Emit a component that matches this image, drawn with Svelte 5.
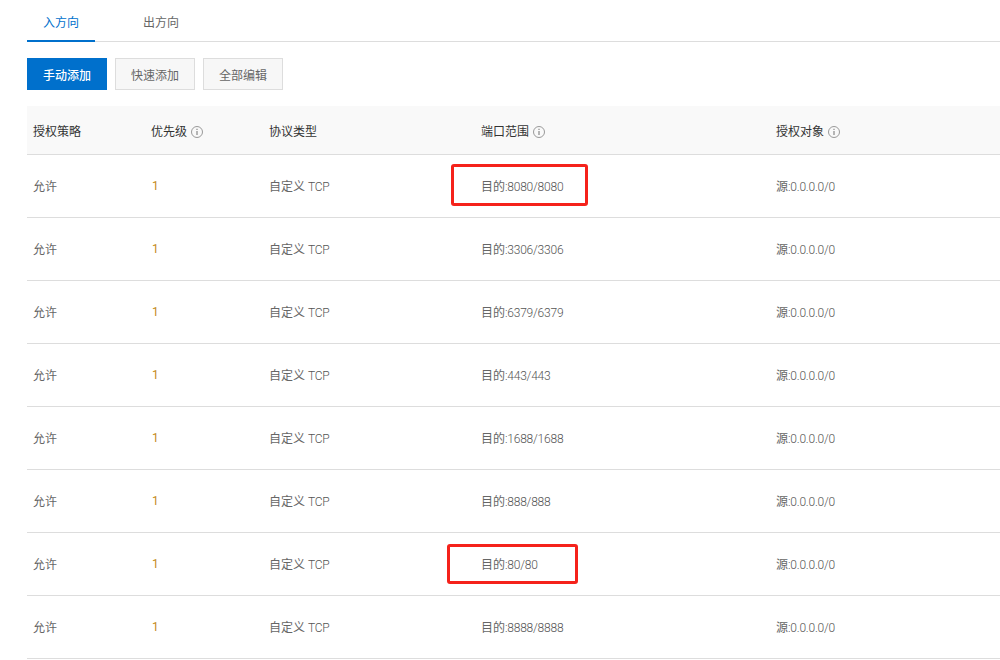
<script lang="ts">
	const ports = ['8080/8080', '3306/3306', '6379/6379', '443/443', '1688/1688', '888/888', '80/80', '8888/8888'];
</script>

{#snippet info()}
	<svg class="info" viewBox="0 0 12 12" aria-hidden="true">
		<circle cx="6" cy="6" r="5.5" fill="none" stroke="#999" stroke-width="1" />
		<path d="M6 5v4M6 2.8v1.3" fill="none" stroke="#888" stroke-width="1.2" />
	</svg>
{/snippet}

<div class="page">
	<div class="tabs">
		<div class="tab active">入方向</div>
		<div class="tab">出方向</div>
	</div>

	<div class="actions">
		<button class="primary">手动添加</button>
		<button>快速添加</button>
		<button>全部编辑</button>
	</div>

	<table>
		<colgroup>
			<col style="width: 118px" />
			<col style="width: 118px" />
			<col style="width: 212px" />
			<col style="width: 295px" />
			<col />
		</colgroup>
		<thead>
			<tr>
				<th>授权策略</th>
				<th>优先级 {@render info()}</th>
				<th>协议类型</th>
				<th>端口范围 {@render info()}</th>
				<th>授权对象 {@render info()}</th>
			</tr>
		</thead>
		<tbody>
			{#each ports as port}
				<tr>
					<td>允许</td>
					<td class="priority"><span class="num">1</span></td>
					<td>自定义 <span class="num">TCP</span></td>
					<td>目的<span class="num">:{port}</span></td>
					<td>源<span class="num">:0.0.0.0/0</span></td>
				</tr>
			{/each}
		</tbody>
	</table>

	<div class="mark first"></div>
	<div class="mark second"></div>
</div>

<style>
	:global(body) {
		margin: 0;
		background: #fff;
		overflow: hidden;
	}

	.page {
		position: relative;
		width: 1000px;
		height: 660px;
		box-sizing: border-box;
		padding: 3px 0 0 27px;
		overflow: hidden;
		font-family: Roboto, "Noto Sans CJK SC", sans-serif;
		font-size: 12px;
		color: #666;
	}

	.tabs {
		display: flex;
		height: 38px;
		border-bottom: 1px solid #ddd;
	}

	.tab {
		width: 68px;
		margin-right: 32px;
		height: 38px;
		line-height: 40px;
		box-sizing: border-box;
		text-align: center;
		color: #666;
	}

	.tab.active {
		color: #0070cc;
		border-bottom: 2px solid #0070cc;
		height: 39px;
	}

	.actions {
		display: flex;
		gap: 8px;
		margin-top: 16px;
	}

	button {
		width: 80px;
		height: 32px;
		padding: 0;
		font: inherit;
		color: #666;
		background: #f7f7f7;
		border: 1px solid #ddd;
	}

	button.primary {
		color: #fff;
		background: #0070cc;
		border-color: #0070cc;
		font-weight: 500;
	}

	table {
		width: 973px;
		margin-top: 16px;
		table-layout: fixed;
		border-collapse: collapse;
	}

	th {
		height: 48px;
		padding: 0 6px;
		text-align: left;
		font-weight: 400;
		color: #333;
		background: #f9f9f9;
		border-bottom: 1px solid #ddd;
	}

	td {
		box-sizing: border-box;
		height: 63px;
		padding: 0 6px 2px;
		border-bottom: 1px solid #ddd;
	}

	/* latin text runs narrower than Roboto's default spacing in the original */
	.num {
		font-weight: 300;
		letter-spacing: -0.22px;
		color: #555;
	}

	.priority .num {
		margin-left: 1px;
		font-weight: 400;
		color: #c48a22;
		vertical-align: -1px;
	}

	.info {
		width: 12px;
		height: 12px;
		margin-left: 1px;
		vertical-align: -2px;
	}

	/* hand-drawn annotation boxes lying over the table */
	.mark {
		position: absolute;
		box-sizing: border-box;
		border: 3px solid #f5221b;
		border-radius: 3px;
	}

	.mark.first {
		left: 451px;
		top: 164px;
		width: 137px;
		height: 42px;
	}

	.mark.second {
		left: 447px;
		top: 544px;
		width: 131px;
		height: 40px;
	}
</style>
